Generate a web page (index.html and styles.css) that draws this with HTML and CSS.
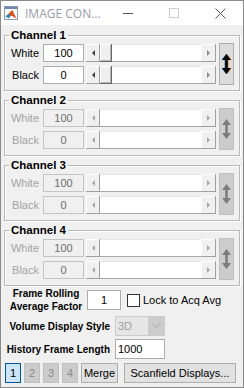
FILE: index.html
```html
<!DOCTYPE html>
<html>
<head>
<meta charset="utf-8">
<link rel="stylesheet" href="styles.css">
</head>
<body>
<div class="window">
  <div class="titlebar">
    <svg class="app-icon" width="14" height="14" viewBox="0 0 14 14">
      <rect x="0.5" y="0.5" width="13" height="13" fill="#fff" stroke="#8c9ab3"/>
      <rect x="1" y="1" width="12" height="2" fill="#6f86b3"/>
      <path d="M1.5 10.5 L4.5 8 L6.5 5.5 L8.5 4 L10.5 8.5 L12.5 12.5 L8 10 Z" fill="#d9531e"/>
      <path d="M1.5 10.5 L4.5 8 L6.5 9.5 L5 12.5 Z" fill="#2f7fc1"/>
    </svg>
    <span class="title">IMAGE CON...</span>
    <div class="caption">
      <div class="cap-btn"><span class="min-glyph"></span></div>
      <div class="cap-btn"><span class="max-glyph"></span></div>
      <div class="cap-btn">
        <svg width="11" height="11" viewBox="0 0 11 11"><path d="M0.5 0.5 L10.5 10.5 M10.5 0.5 L0.5 10.5" stroke="#555" stroke-width="1"/></svg>
      </div>
    </div>
  </div>

  <div class="content">
    <fieldset class="channel">
      <legend>Channel 1</legend>
      <div class="chan-body">
        <div class="rows">
          <div class="row">
            <span class="lbl">White</span>
            <span class="edit">100</span>
            <div class="slider">
              <span class="sb-btn"><span class="tri-left"></span></span>
              <span class="thumb"></span>
              <span class="track"></span>
              <span class="sb-btn right"><span class="tri-right"></span></span>
            </div>
          </div>
          <div class="row">
            <span class="lbl">Black</span>
            <span class="edit">0</span>
            <div class="slider">
              <span class="sb-btn"><span class="tri-left"></span></span>
              <span class="thumb"></span>
              <span class="track"></span>
              <span class="sb-btn right"><span class="tri-right"></span></span>
            </div>
          </div>
        </div>
        <div class="toggle">
          <svg width="10" height="20" viewBox="0 0 10 20">
            <path d="M4.5 0 L9 6 L5.8 6 L5.8 14 L9 14 L4.5 20 L0 14 L3.2 14 L3.2 6 L0 6 Z" fill="#2f7fd8" transform="translate(-0.6 0)"/>
            <path d="M4.5 0 L9 6 L5.8 6 L5.8 14 L9 14 L4.5 20 L0 14 L3.2 14 L3.2 6 L0 6 Z" fill="#e89a2a" transform="translate(0.8 0)"/>
            <path d="M4.5 0 L9 6 L5.8 6 L5.8 14 L9 14 L4.5 20 L0 14 L3.2 14 L3.2 6 L0 6 Z" fill="#000"/>
          </svg>
        </div>
      </div>
    </fieldset>

    <fieldset class="channel disabled">
      <legend>Channel 2</legend>
      <div class="chan-body">
        <div class="rows">
          <div class="row">
            <span class="lbl">White</span>
            <span class="edit">100</span>
            <div class="slider">
              <span class="sb-btn"><span class="tri-left"></span></span>
              <span class="track"></span>
              <span class="sb-btn right"><span class="tri-right"></span></span>
            </div>
          </div>
          <div class="row">
            <span class="lbl">Black</span>
            <span class="edit">0</span>
            <div class="slider">
              <span class="sb-btn"><span class="tri-left"></span></span>
              <span class="track"></span>
              <span class="sb-btn right"><span class="tri-right"></span></span>
            </div>
          </div>
        </div>
        <div class="toggle">
          <svg width="10" height="20" viewBox="0 0 10 20">
            <path d="M4.5 0 L9 6 L5.8 6 L5.8 14 L9 14 L4.5 20 L0 14 L3.2 14 L3.2 6 L0 6 Z" fill="#7d7d7d"/>
          </svg>
        </div>
      </div>
    </fieldset>

    <fieldset class="channel disabled">
      <legend>Channel 3</legend>
      <div class="chan-body">
        <div class="rows">
          <div class="row">
            <span class="lbl">White</span>
            <span class="edit">100</span>
            <div class="slider">
              <span class="sb-btn"><span class="tri-left"></span></span>
              <span class="track"></span>
              <span class="sb-btn right"><span class="tri-right"></span></span>
            </div>
          </div>
          <div class="row">
            <span class="lbl">Black</span>
            <span class="edit">0</span>
            <div class="slider">
              <span class="sb-btn"><span class="tri-left"></span></span>
              <span class="track"></span>
              <span class="sb-btn right"><span class="tri-right"></span></span>
            </div>
          </div>
        </div>
        <div class="toggle">
          <svg width="10" height="20" viewBox="0 0 10 20">
            <path d="M4.5 0 L9 6 L5.8 6 L5.8 14 L9 14 L4.5 20 L0 14 L3.2 14 L3.2 6 L0 6 Z" fill="#7d7d7d"/>
          </svg>
        </div>
      </div>
    </fieldset>

    <fieldset class="channel disabled">
      <legend>Channel 4</legend>
      <div class="chan-body">
        <div class="rows">
          <div class="row">
            <span class="lbl">White</span>
            <span class="edit">100</span>
            <div class="slider">
              <span class="sb-btn"><span class="tri-left"></span></span>
              <span class="track"></span>
              <span class="sb-btn right"><span class="tri-right"></span></span>
            </div>
          </div>
          <div class="row">
            <span class="lbl">Black</span>
            <span class="edit">0</span>
            <div class="slider">
              <span class="sb-btn"><span class="tri-left"></span></span>
              <span class="track"></span>
              <span class="sb-btn right"><span class="tri-right"></span></span>
            </div>
          </div>
        </div>
        <div class="toggle">
          <svg width="10" height="20" viewBox="0 0 10 20">
            <path d="M4.5 0 L9 6 L5.8 6 L5.8 14 L9 14 L4.5 20 L0 14 L3.2 14 L3.2 6 L0 6 Z" fill="#7d7d7d"/>
          </svg>
        </div>
      </div>
    </fieldset>

    <div class="frame-row">
      <span class="blabel center">Frame Rolling<br>Average Factor</span>
      <span class="edit big">1</span>
      <span class="checkbox"></span>
      <span class="check-text">Lock to Acq Avg</span>
    </div>

    <div class="opt-row">
      <span class="blabel right">Volume Display Style</span>
      <div class="popup">
        <span class="popup-text">3D</span>
        <span class="popup-arrow">
          <svg width="9" height="6" viewBox="0 0 9 6"><path d="M0.5 0.5 L4.5 4.5 L8.5 0.5" fill="none" stroke="#a6a6a6" stroke-width="1"/></svg>
        </span>
      </div>
    </div>

    <div class="opt-row">
      <span class="blabel right">History Frame Length</span>
      <span class="edit big left">1000</span>
    </div>

    <div class="btn-row">
      <span class="btn num selected">1</span>
      <span class="btn num off">2</span>
      <span class="btn num off">3</span>
      <span class="btn num off">4</span>
      <span class="btn merge">Merge</span>
      <span class="btn scan">Scanfield Displays...</span>
    </div>
  </div>
</div>
</body>
</html>
```
FILE: styles.css
```css
* { box-sizing: border-box; }

body {
  margin: 0;
  font-family: "Liberation Sans", Arial, sans-serif;
  font-size: 11px;
  color: #000;
  background: #fff;
}

.window {
  width: 244px;
  height: 388px;
  border: 1px solid #8a8a8a;
  background: #f0f0f0;
  display: flex;
  flex-direction: column;
  overflow: hidden;
}

/* Title bar */
.titlebar {
  flex: none;
  height: 24px;
  background: #fff;
  display: flex;
  align-items: center;
}
.app-icon { margin-left: 3px; flex: none; }
.title {
  margin-left: 7px;
  font-family: "Open Sans", "Noto Sans", sans-serif;
  font-size: 12px;
  color: #9a9aaa;
  white-space: nowrap;
}
.caption {
  margin-left: auto;
  display: flex;
  height: 24px;
}
.cap-btn {
  width: 46px;
  height: 24px;
  display: flex;
  align-items: center;
  justify-content: center;
}
.min-glyph { width: 10px; height: 1px; background: #555; }
.max-glyph { width: 10px; height: 10px; border: 1px solid #cfcfcf; }

/* Content */
.content {
  flex: 1;
  padding: 4px 3px 0 3px;
  display: flex;
  flex-direction: column;
}

.channel {
  margin: 0 0 3px 0;
  padding: 2px 0 5px 0;
  border: 1px solid #b9b9b9;
  box-shadow: inset 1px 1px 0 #fff, 1px 1px 0 #fff;
  min-width: 0;
}
.channel legend {
  margin-left: 4px;
  padding: 0 2px;
  font-weight: bold;
  font-size: 11.5px;
  line-height: 12px;
}

.chan-body {
  display: flex;
  align-items: center;
}
.rows {
  display: flex;
  flex-direction: column;
  gap: 4px;
}
.row {
  display: flex;
  align-items: center;
  height: 18px;
}
.lbl {
  width: 34px;
  text-align: right;
}
.edit {
  margin-left: 4px;
  width: 41px;
  height: 18px;
  background: #fff;
  border: 1px solid #adadad;
  text-align: center;
  line-height: 16px;
}
.slider {
  margin-left: 2px;
  width: 130px;
  height: 18px;
  display: flex;
}
.sb-btn {
  width: 14px;
  height: 18px;
  background: #f0f0f0;
  box-shadow: inset -1px -1px 0 #a0a0a0, inset 1px 1px 0 #fff;
  display: flex;
  align-items: center;
  justify-content: center;
  flex: none;
}
.sb-btn.right { width: 15px; }
.thumb {
  width: 12px;
  height: 18px;
  background: #f0f0f0;
  box-shadow: inset -1px -1px 0 #696969, inset 1px 1px 0 #fff, inset -2px -2px 0 #b5b5b5;
  flex: none;
}
.track {
  flex: 1;
  background: #fff;
  border-top: 1px solid #e6e6e6;
  border-bottom: 1px solid #a8a8a8;
}
.tri-left {
  width: 0; height: 0;
  border-top: 3px solid transparent;
  border-bottom: 3px solid transparent;
  border-right: 3px solid #404040;
}
.tri-right {
  width: 0; height: 0;
  border-top: 3px solid transparent;
  border-bottom: 3px solid transparent;
  border-left: 3px solid #8a8a8a;
}

.toggle {
  margin-left: 3px;
  width: 15px;
  height: 42px;
  background: #dcdcdc;
  border: 1px solid #adadad;
  display: flex;
  align-items: center;
  justify-content: center;
}

/* Disabled channels */
.disabled .lbl { color: #a3a3a3; }
.disabled .edit {
  background: #f0f0f0;
  border-color: #c4c4c4;
  color: #6d6d6d;
}
.disabled .tri-left { border-right-color: #a6a6a6; }
.disabled .tri-right { border-left-color: #a6a6a6; }
.disabled .toggle {
  background: #cccccc;
  border-color: #bfbfbf;
}

/* Bottom controls */
.blabel {
  font-weight: bold;
  font-size: 10px;
  line-height: 13px;
}
.blabel.center { margin-left: 2px; width: 80px; text-align: center; }
.blabel.right { margin-left: 2px; width: 104px; text-align: right; }

.frame-row {
  margin-top: -2px;
  display: flex;
  align-items: center;
  height: 26px;
}
.edit.big {
  height: 20px;
  line-height: 18px;
}
.frame-row .edit { margin-left: 1px; width: 34px; }
.checkbox {
  margin-left: 6px;
  width: 13px;
  height: 13px;
  background: #fff;
  border: 1px solid #333;
}
.check-text { margin-left: 3px; }

.opt-row {
  margin-top: 3px;
  display: flex;
  align-items: center;
  height: 20px;
}
.opt-row .edit { margin-left: 5px; width: 50px; }
.edit.left { text-align: left; padding-left: 2px; }

.popup {
  margin-left: 5px;
  width: 50px;
  height: 20px;
  border: 1px solid #cccccc;
  background: #e6e6e6;
  display: flex;
}
.popup-text {
  flex: 1;
  color: #a0a0a0;
  line-height: 18px;
  padding-left: 2px;
}
.popup-arrow {
  width: 16px;
  background: #cccccc;
  display: flex;
  align-items: center;
  justify-content: center;
}

.btn-row {
  margin-top: 4px;
  margin-left: 1px;
  display: flex;
  height: 20px;
  gap: 3px;
}
.btn {
  height: 20px;
  border: 1px solid #adadad;
  background: #e1e1e1;
  display: flex;
  align-items: center;
  justify-content: center;
}
.btn.num { width: 16px; }
.btn.selected { background: #cce4f7; border-color: #005499; }
.btn.off { background: #cccccc; border-color: #bfbfbf; color: #8a8a8a; }
.btn.merge { width: 37px; }
.btn.scan { width: 112px; margin-left: 3px; }
```
